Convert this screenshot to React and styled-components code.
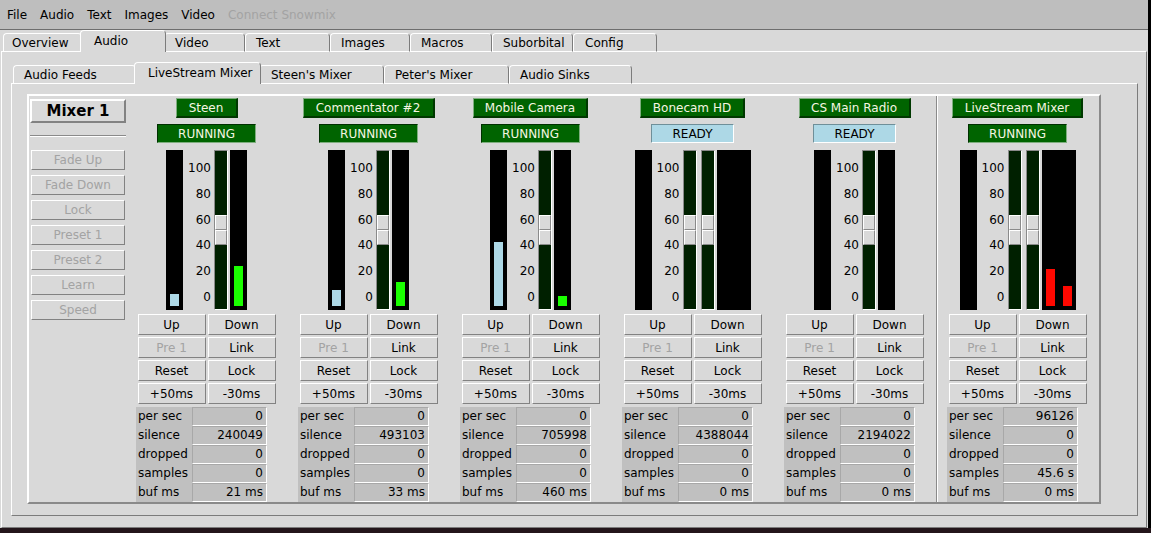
import React from 'react';
import styled, { createGlobalStyle } from 'styled-components';

const GlobalStyle = createGlobalStyle`
  html, body {
    margin: 0;
    padding: 0;
    background: #000;
  }
  body {
    font-family: "DejaVu Sans", "Liberation Sans", sans-serif;
    font-size: 12px;
    color: #000;
  }
`;

const menus = ['File', 'Audio', 'Text', 'Images', 'Video'];

const topTabs = [
  { label: 'Overview', w: 79, pad: 8 },
  { label: 'Audio', w: 82, active: true },
  { label: 'Video', w: 81 },
  { label: 'Text', w: 85 },
  { label: 'Images', w: 80 },
  { label: 'Macros', w: 82 },
  { label: 'Suborbital', w: 81 },
  { label: 'Config', w: 84, pad: 11 },
];

const audioTabs = [
  { label: 'Audio Feeds', w: 123 },
  { label: 'LiveStream Mixer', w: 123, active: true },
  { label: "Steen's Mixer", w: 125, pad: 11 },
  { label: "Peter's Mixer", w: 125 },
  { label: 'Audio Sinks', w: 123 },
];

const mixerButtons = ['Fade Up', 'Fade Down', 'Lock', 'Preset 1', 'Preset 2', 'Learn', 'Speed'];
const statLabels = ['per sec', 'silence', 'dropped', 'samples', 'buf ms'];
const scaleMarks = ['100', '80', '60', '40', '20', '0'];

const channels = [
  { name: 'Steen', w: 62, status: 'RUNNING', inBars: [12], outBars: [40], color: '#1aff00',
    stats: ['0', '240049', '0', '0', '21 ms'] },
  { name: 'Commentator #2', w: 132, status: 'RUNNING', inBars: [16], outBars: [24], color: '#1aff00',
    stats: ['0', '493103', '0', '0', '33 ms'] },
  { name: 'Mobile Camera', w: 115, status: 'RUNNING', inBars: [64], outBars: [10], color: '#1aff00',
    stats: ['0', '705998', '0', '0', '460 ms'] },
  { name: 'Bonecam HD', w: 105, status: 'READY', stereo: true, inBars: [], outBars: [], color: '#1aff00',
    stats: ['0', '4388044', '0', '0', '0 ms'] },
  { name: 'CS Main Radio', w: 112, status: 'READY', inBars: [], outBars: [], color: '#1aff00',
    stats: ['0', '2194022', '0', '0', '0 ms'] },
  { name: 'LiveStream Mixer', w: 131, status: 'RUNNING', stereo: true, inBars: [], outBars: [37, 20], color: '#ff0800',
    stats: ['96126', '0', '0', '45.6 s', '0 ms'] },
];

const Screen = styled.div`
  width: 1151px;
  height: 533px;
  display: flex;
  flex-direction: column;
  overflow: hidden;
`;

const Window = styled.div`
  width: 1148px;
  height: 528px;
  background: #d9d9d9;
  display: flex;
  flex-direction: column;
  overflow: hidden;
`;

const Desktop = styled.div`
  flex: 1;
  background: #24161b;
`;

const MenuBar = styled.div`
  display: flex;
  align-items: center;
  height: 29px;
  padding-left: 0.5px;
  background: #bebebe;
  border-bottom: 1px solid #6e6e6e;
`;

const MenuItem = styled.span`
  padding: 0 6.5px;
  color: ${p => (p.$disabled ? '#a3a3a3' : '#000')};
`;

const Notebook = styled.div`
  display: flex;
  flex-direction: column;
  flex: ${p => (p.$grow ? 1 : 'none')};
  margin-left: ${p => p.$left}px;
  width: ${p => p.$width}px;
`;

const TabRow = styled.div`
  display: flex;
  align-items: flex-end;
  height: 22px;
  padding-left: 2px;
  margin-bottom: -1px;
  position: relative;
  z-index: 1;
`;

const Tab = styled.div`
  box-sizing: border-box;
  width: ${p => (p.$active ? p.$w + 4 : p.$w)}px;
  height: ${p => (p.$active ? 22 : 19)}px;
  margin: 0 ${p => (p.$active ? -2 : 0)}px;
  padding: ${p => (p.$active ? `3px 0 0 ${p.$pad + 3}px` : `2px 0 0 ${p.$pad}px`)};
  background: #d9d9d9;
  border-top: 1px solid #fff;
  border-left: 1px solid #fff;
  border-right: 1px solid #7c7c7c;
  border-bottom: ${p => (p.$active ? 'none' : '1px solid #fff')};
  border-radius: 4px 4px 0 0;
  line-height: 14px;
  white-space: nowrap;
  position: relative;
  z-index: ${p => (p.$active ? 2 : 1)};
`;

const Pane = styled.div`
  box-sizing: border-box;
  flex: ${p => (p.$grow ? 1 : 'none')};
  display: flex;
  flex-direction: column;
  border: 1px solid;
  border-color: #fff #7c7c7c #7c7c7c #fff;
  padding: ${p => p.$pad};
`;

const MixerFrame = styled.div`
  box-sizing: border-box;
  width: 1074px;
  height: 410px;
  border: 2px solid;
  border-color: #fff #8a8a8a #8a8a8a #fff;
  padding: 1px 0 0 1px;
  display: flex;
`;

const LeftCol = styled.div`
  width: 96px;
  margin-top: 2px;
  display: flex;
  flex-direction: column;
  align-items: center;
`;

const Raised = styled.button`
  box-sizing: border-box;
  margin: 0;
  padding: 0;
  font: inherit;
  background: #d9d9d9;
  color: #000;
  border: 1px solid;
  border-color: #fff #828282 #828282 #fff;
  line-height: 14px;
  white-space: nowrap;
  &:disabled {
    color: #a3a3a3;
  }
`;

const MixerTitle = styled(Raised)`
  width: 96px;
  height: 24px;
  border-width: 2px;
  font-size: 15px;
  font-weight: bold;
  line-height: 18px;
`;

const Separator = styled.div`
  width: 96px;
  margin: 12px 0 13px;
  border-top: 1px solid #8a8a8a;
  border-bottom: 1px solid #fff;
`;

const SideButton = styled(Raised)`
  width: 94px;
  height: 20px;
  margin-bottom: 5px;
`;

const Channels = styled.div`
  display: flex;
  gap: 21px;
  margin-left: 10px;
`;

const Divider = styled.div`
  width: 0;
  border-left: 1px solid #8a8a8a;
  border-right: 1px solid #fff;
  margin: -1px -12px 0 -10px;
`;

const Channel = styled.div`
  width: 141px;
  display: flex;
  flex-direction: column;
  align-items: center;
`;

const NameButton = styled.div`
  box-sizing: border-box;
  width: ${p => p.$w}px;
  height: 20px;
  margin-top: 1px;
  background: #006400;
  color: #f6f6e2;
  border-style: solid;
  border-width: 1px 2px 2px 1px;
  border-color: #7fae7f #003800 #003800 #7fae7f;
  line-height: 18px;
  text-align: center;
  white-space: nowrap;
`;

const Status = styled.div`
  box-sizing: border-box;
  height: 19px;
  margin-top: 6px;
  padding: 0 20px;
  border: 1px solid;
  line-height: 18px;
  white-space: nowrap;
  background: ${p => (p.$ready ? '#add8e6' : '#006400')};
  color: ${p => (p.$ready ? '#000' : '#f6f6e2')};
  border-color: ${p => (p.$ready ? '#6f8f99 #fff #fff #6f8f99' : '#003000 #7fae7f #7fae7f #003000')};
`;

const MeterGroup = styled.div`
  display: flex;
  height: 160px;
  margin-top: 7px;
`;

const Meter = styled.div`
  box-sizing: border-box;
  width: ${p => (p.$wide ? 34 : 17)}px;
  height: 160px;
  background: #000;
  display: flex;
  align-items: flex-end;
  gap: 8px;
  padding: 0 4px 4px;
`;

const Bar = styled.div`
  width: 9px;
  flex: none;
  height: ${p => p.$h}px;
  background: ${p => p.$color};
`;

const Scale = styled.div`
  box-sizing: border-box;
  width: 31px;
  height: 160px;
  display: flex;
  flex-direction: column;
  justify-content: space-between;
  align-items: flex-end;
  padding: 11px 3px 6px 0;
  line-height: 14px;
`;

const Trough = styled.div`
  box-sizing: border-box;
  width: 14px;
  height: 160px;
  margin-right: ${p => p.$gap}px;
  padding-top: ${p => p.$offset}px;
  background: #002000;
  border: 1px solid;
  border-color: #8a8a8a #fff #fff #8a8a8a;
  display: flex;
  flex-direction: column;
`;

const HandleHalf = styled.div`
  box-sizing: border-box;
  height: 15px;
  background: #d9d9d9;
  border: 1px solid;
  border-color: #fff #8a8a8a #8a8a8a #fff;
`;

const ButtonGrid = styled.div`
  display: grid;
  grid-template-columns: 68px 68px;
  grid-auto-rows: 21px;
  gap: 2px;
  margin-top: 4px;
`;

const Stats = styled.div`
  align-self: flex-start;
  margin-top: 3px;
  display: grid;
  grid-template-columns: 56px 75px;
  grid-auto-rows: 19px;
  background: #c0c0c0;
`;

const StatLabel = styled.div`
  padding-left: 2px;
  line-height: 19px;
  white-space: nowrap;
`;

const StatValue = styled.div`
  box-sizing: border-box;
  padding-right: 3px;
  text-align: right;
  line-height: 17px;
  border-top: 1px solid #a8a8a8;
  border-left: 1px solid #a8a8a8;
  border-right: 1px solid #fff;
  border-bottom: 1px solid #fff;
`;

function Fader({ gap }) {
  return (
    <Trough $gap={gap} $offset={64}>
      <HandleHalf />
      <HandleHalf />
    </Trough>
  );
}

function ChannelStrip({ ch }) {
  return (
    <Channel>
      <NameButton $w={ch.w}>{ch.name}</NameButton>
      <Status $ready={ch.status === 'READY'}>{ch.status}</Status>
      <MeterGroup>
        <Meter>
          {ch.inBars.map((h, i) => (
            <Bar key={i} $h={h} $color="#add8e6" />
          ))}
        </Meter>
        <Scale>
          {scaleMarks.map(m => (
            <span key={m}>{m}</span>
          ))}
        </Scale>
        {ch.stereo && <Fader gap={4} />}
        <Fader gap={2} />
        <Meter $wide={ch.stereo}>
          {ch.outBars.map((h, i) => (
            <Bar key={i} $h={h} $color={ch.color} />
          ))}
        </Meter>
      </MeterGroup>
      <ButtonGrid>
        <Raised>Up</Raised>
        <Raised>Down</Raised>
        <Raised disabled>Pre 1</Raised>
        <Raised>Link</Raised>
        <Raised>Reset</Raised>
        <Raised>Lock</Raised>
        <Raised>+50ms</Raised>
        <Raised>-30ms</Raised>
      </ButtonGrid>
      <Stats>
        {statLabels.map((l, i) => (
          <React.Fragment key={l}>
            <StatLabel>{l}</StatLabel>
            <StatValue>{ch.stats[i]}</StatValue>
          </React.Fragment>
        ))}
      </Stats>
    </Channel>
  );
}

export default function App() {
  return (
    <>
      <GlobalStyle />
      <Screen>
        <Window>
          <MenuBar>
            {menus.map(m => (
              <MenuItem key={m}>{m}</MenuItem>
            ))}
            <MenuItem $disabled>Connect Snowmix</MenuItem>
          </MenuBar>
          <Notebook $grow $left={1} $width={1146}>
            <TabRow>
              {topTabs.map(t => (
                <Tab key={t.label} $w={t.w} $active={t.active} $pad={t.pad ?? 10}>
                  {t.label}
                </Tab>
              ))}
            </TabRow>
            <Pane $grow $pad="10px 8px 0 9px">
              <Notebook $left={0} $width={1127}>
                <TabRow>
                  {audioTabs.map(t => (
                    <Tab key={t.label} $w={t.w} $active={t.active} $pad={t.pad ?? 10}>
                      {t.label}
                    </Tab>
                  ))}
                </TabRow>
                <Pane $pad="10px 0 11px 15px">
                  <MixerFrame>
                    <LeftCol>
                      <MixerTitle>Mixer 1</MixerTitle>
                      <Separator />
                      {mixerButtons.map(b => (
                        <SideButton key={b} disabled>
                          {b}
                        </SideButton>
                      ))}
                    </LeftCol>
                    <Channels>
                      {channels.slice(0, 5).map(ch => (
                        <ChannelStrip key={ch.name} ch={ch} />
                      ))}
                      <Divider />
                      <ChannelStrip ch={channels[5]} />
                    </Channels>
                  </MixerFrame>
                </Pane>
              </Notebook>
            </Pane>
          </Notebook>
        </Window>
        <Desktop />
      </Screen>
    </>
  );
}
